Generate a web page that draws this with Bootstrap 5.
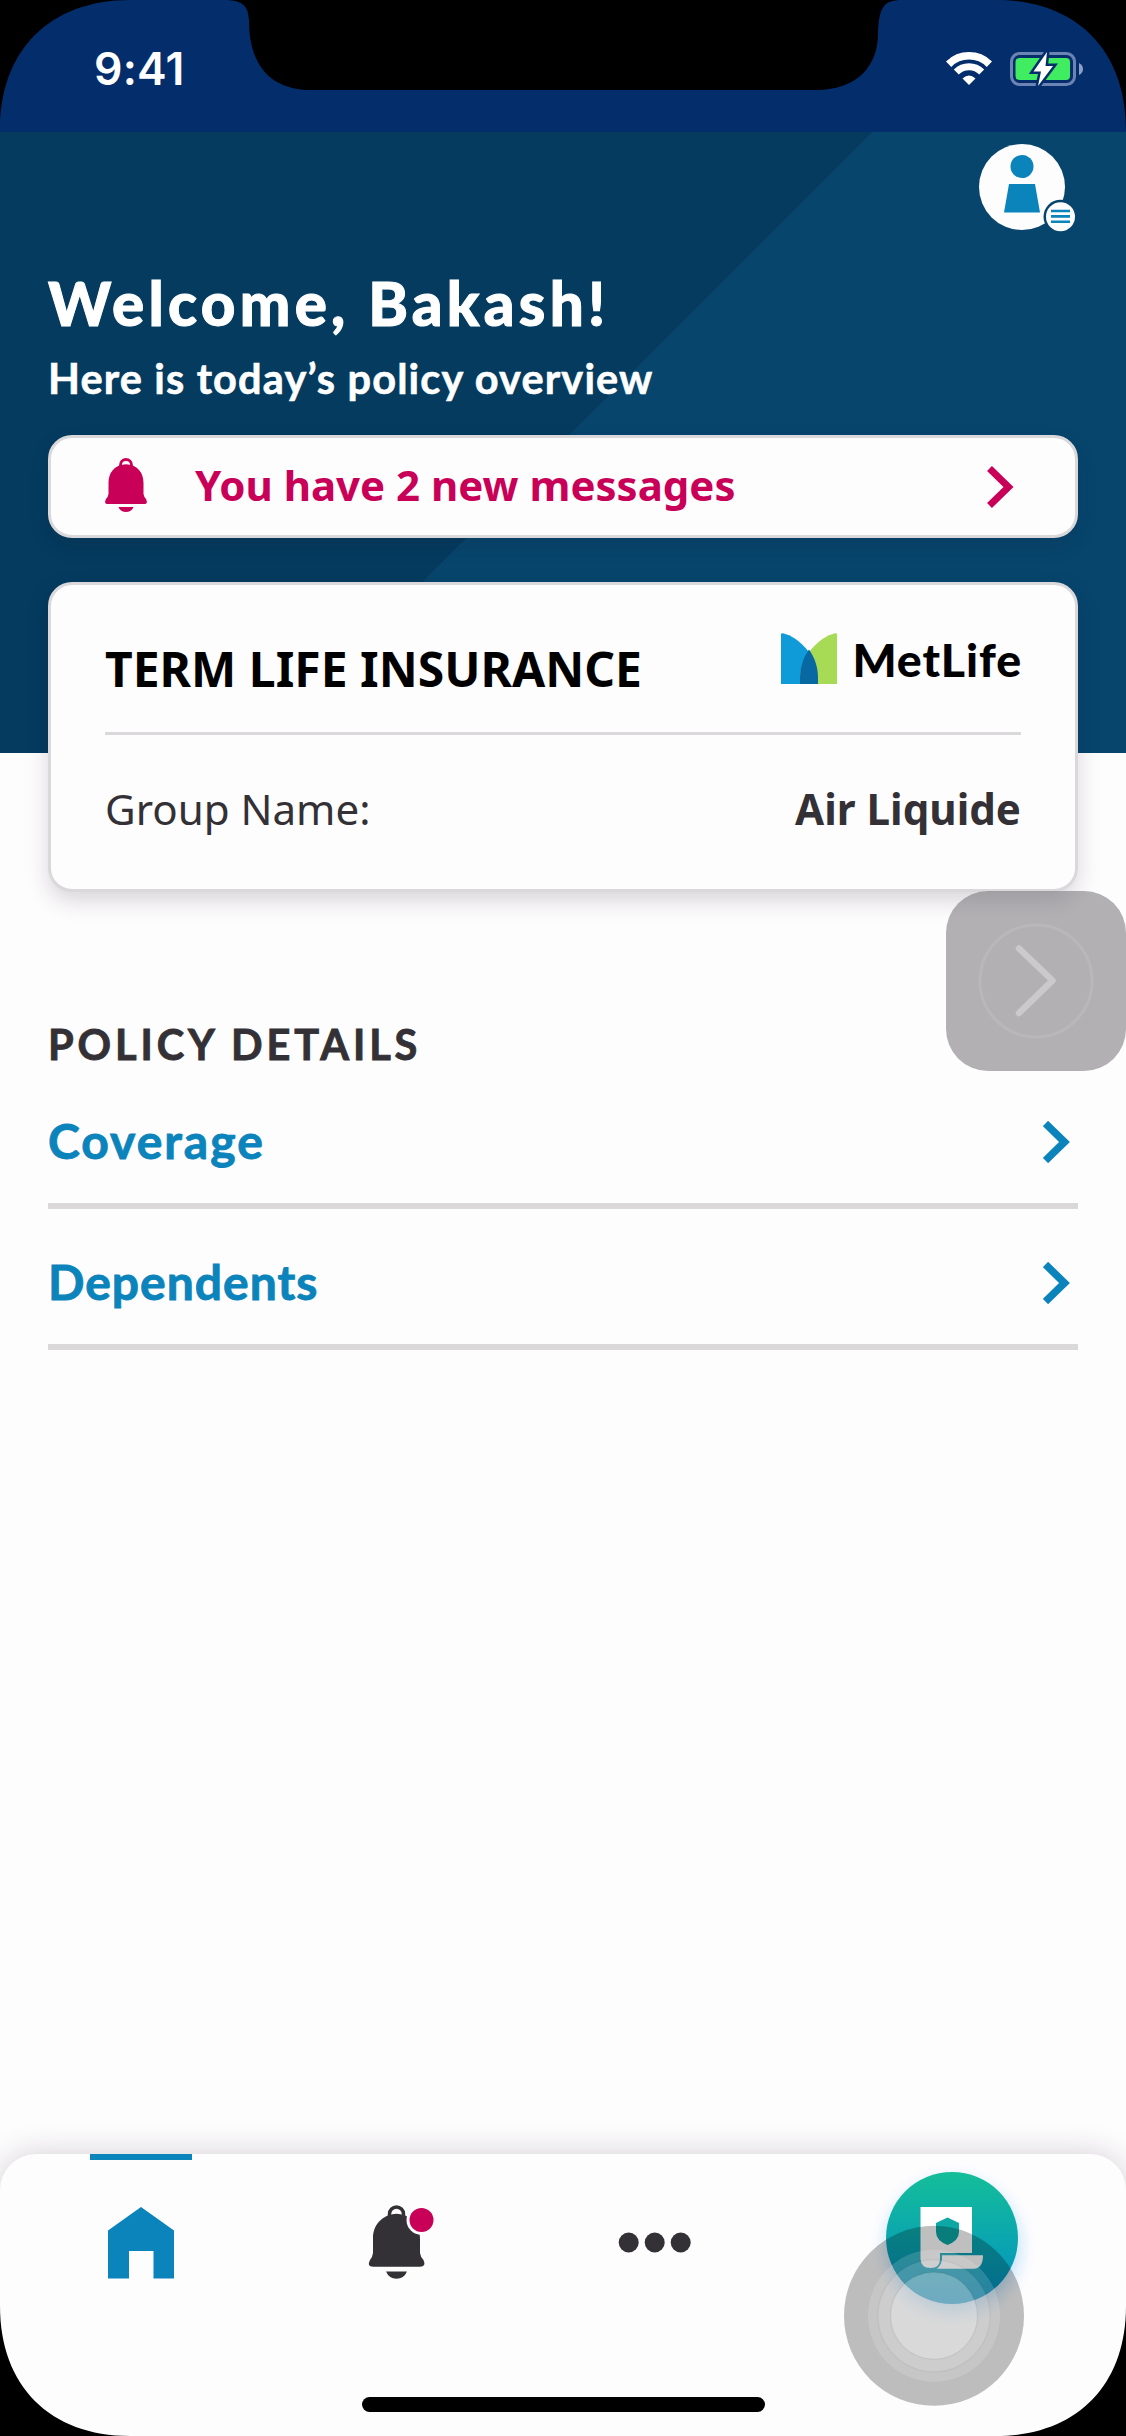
<!DOCTYPE html>
<html lang="en">
<head>
<meta charset="utf-8">
<meta name="viewport" content="width=device-width, initial-scale=1">
<title>Policy overview</title>
<link href="https://cdn.jsdelivr.net/npm/bootstrap@5.3.0/dist/css/bootstrap.min.css" rel="stylesheet">
<style>
  body { margin: 0; background: #fefdfe; overflow-x: hidden; }
  svg { display: block; }
  .phone { width: 1126px; height: 2436px; background: #fefdfe; font-family: Lato, "Liberation Sans", sans-serif; }
  .noto { font-family: "Noto Sans", "Open Sans", sans-serif; }
  .statusbar { height: 132px; background: #042d6b; color: #fff; padding: 6px 42px 0 94px; flex: none; }
  .clock { font: 600 44.5px/1 Inter, "Liberation Sans", sans-serif; letter-spacing: .2px; }
  .battery { margin-left: 18px; }
  .hero { height: 621px; flex: none; padding: 10px 48px 0; color: #fff;
    background: #07456d linear-gradient(135deg, #043b5f 50%, #07456d 50%) 0 0 / 873px 873px no-repeat; }
  .profile { margin-right: 2px; }
  .hello { font-weight: 900; font-size: 60px; line-height: 72px; letter-spacing: 4.3px; margin: 33px 0 0; -webkit-text-stroke: 1px; }
  .subhello { font-weight: 700; font-size: 41.5px; line-height: 50px; letter-spacing: 1.15px; margin: 14px 0 0; -webkit-text-stroke: .6px; }
  .panel { border: 3px solid #dad8da; border-radius: 24px; background: #fefdfe; box-shadow: 0 9px 22px rgba(30, 20, 35, .17); }
  .alertbox { height: 103px; margin-top: 32px; padding: 0 61px 0 54px; color: #c90058; font-weight: 700; font-size: 42px; line-height: 50px; text-decoration: none; box-shadow: 0 8px 20px rgba(30, 20, 35, .12); }
  .alertbox span { margin: -3px 0 0 48px; }
  .bell { margin-top: -4px; }
  .policy { height: 310px; margin: -171px 48px 0; padding: 0 54px; flex: none; }
  .policy-head { height: 150px; border-bottom: 3px solid #dad8da; }
  .policy-title { font-size: 48px; line-height: 60px; font-weight: 700; color: #000; margin: 20px 0 0; }
  .brandname { font-family: Lato, sans-serif; font-size: 46.5px; font-weight: 900; letter-spacing: .9px; color: #000; line-height: 52px; margin: 1px -1px 0 15px; }
  .policy-row { height: 147px; font-size: 42.1px; color: #333135; }
  .details { padding: 0 48px; margin-top: 127px; flex: none; }
  .details-title { font-size: 41.5px; line-height: 50px; font-weight: 700; letter-spacing: 3.9px; color: #333135; margin: 0; -webkit-text-stroke: .9px; }
  .details-link { height: 141px; border-bottom: 6px solid #dad8d9; font-size: 48px; font-weight: 700; letter-spacing: 1px; color: #0b83bb; padding: 12px 8px 0 0; text-decoration: none; }
  .details-link span { -webkit-text-stroke: .9px; margin-top: -2px; }
  .details-title + .details-link { height: 140px; letter-spacing: 2px; }
  .assist { left: 946px; top: 891px; width: 180px; height: 180px; border-radius: 42px; background: rgba(103, 99, 105, .5); }
  .tabs { height: 282px; flex: none; border-radius: 36px 36px 0 0; background: #fefdfe; box-shadow: 0 0 32px rgba(30, 20, 35, .2); }
  .overlay { left: 0; top: 0; pointer-events: none; }
</style>
</head>
<body>
<div class="phone position-relative d-flex flex-column overflow-hidden">
  <header class="statusbar d-flex align-items-center justify-content-between">
    <div class="clock">9:41</div>
    <div class="d-flex align-items-center">
      <svg width="46" height="34" viewBox="0 0 46 34" fill="none" stroke="#fff">
        <path d="M2.6 12.2A29 29 0 0 1 43.4 12.2" stroke-width="7.6"/>
        <path d="M10.3 20A18 18 0 0 1 35.7 20" stroke-width="7"/>
        <path d="M16.5 26.5Q23 20.5 29.5 26.5L23 33Z" fill="#fff" stroke="none"/>
      </svg>
      <svg class="battery" width="74" height="34" viewBox="0 0 74 34">
        <rect x="1.5" y="1.5" width="63" height="31" rx="8" fill="none" stroke="#6b84b3" stroke-width="3"/>
        <path d="M69 11Q73 13 73 17T69 23Z" fill="#8c9fc5"/>
        <rect x="5.5" y="6" width="54.5" height="22" rx="4" fill="#40ed61"/>
        <path d="M37 0L23.5 19.5H31L28 34L43 14H35.5Z" fill="#fff" stroke="#042d6b" stroke-width="5" paint-order="stroke"/>
      </svg>
    </div>
  </header>

  <section class="hero">
    <div class="d-flex justify-content-end">
      <svg class="profile" width="98" height="92" viewBox="978 142 98 92">
        <circle cx="1022" cy="187" r="43" fill="#fefdfe"/>
        <circle cx="1022" cy="166.5" r="11.5" fill="#0b83bb"/>
        <path d="M1009 184H1035L1040 212.5H1004Z" fill="#0b83bb"/>
        <circle cx="1060.5" cy="216.7" r="17" fill="#07456d"/>
        <circle cx="1060.5" cy="216.7" r="14.5" fill="#fefdfe"/>
        <path d="M1051 211H1070M1051 216.4H1070M1051 221.8H1070" stroke="#0b83bb" stroke-width="2.6"/>
      </svg>
    </div>
    <h1 class="hello">Welcome, Bakash!</h1>
    <p class="subhello">Here is today’s policy overview</p>
    <a class="panel alertbox noto d-flex align-items-center" href="#">
      <svg class="bell" width="42" height="54" viewBox="0 0 42 54">
        <path d="M21 6C9 7 3.500 15 3.500 25V36Q3 39 1 41Q-1.500 46 3 46H39Q43.500 46 41 41Q39 39 38.500 36V25C38.500 15 33 7 21 6Z" fill="#c90058"/>
        <path d="M15.500 9V7A5.500 5.500 0 0 1 26.500 7V9" fill="#fefdfe" stroke="#c90058" stroke-width="2.800"/>
        <path d="M14 7.800Q21 4.500 28 7.800V12H14Z" fill="#c90058"/>
        <path d="M13.500 49H28.500Q26.500 54 21 54T13.500 49Z" fill="#c90058"/>
      </svg>
      <span class="flex-grow-1">You have 2 new messages</span>
      <svg width="27" height="42" viewBox="0 0 27 42"><path d="M2.500 2.500L21.500 21L2.500 39.500" fill="none" stroke="#c90058" stroke-width="7"/></svg>
    </a>
  </section>

  <section class="panel policy noto position-relative">
    <div class="policy-head d-flex align-items-center justify-content-between">
      <h2 class="policy-title">TERM LIFE INSURANCE</h2>
      <div class="d-flex align-items-center">
        <svg width="56" height="51" viewBox="0 0 56 51">
          <path d="M0 51V1.500Q0 0 2 .3C18 4 37 24 37 45V51Z" fill="#0f9ad8"/>
          <path d="M56 51V1.500Q56 0 54 .3C38 4 19 24 19 45V51Z" fill="#a7db55"/>
          <path d="M28 16.500C22 25 19 35 19 45V51H37V45C37 35 34 25 28 16.500Z" fill="#0868a2"/>
        </svg>
        <span class="brandname">MetLife</span>
      </div>
    </div>
    <div class="policy-row d-flex align-items-center justify-content-between">
      <span>Group Name:</span><strong>Air Liquide</strong>
    </div>
  </section>

  <section class="details">
    <h3 class="details-title">POLICY DETAILS</h3>
    <a class="details-link d-flex align-items-center justify-content-between" href="#"><span>Coverage</span>
      <svg width="27" height="42" viewBox="0 0 27 42"><path d="M2.500 2.500L21.500 21L2.500 39.500" fill="none" stroke="#0b83bb" stroke-width="7.500"/></svg></a>
    <a class="details-link d-flex align-items-center justify-content-between" href="#"><span>Dependents</span>
      <svg width="27" height="42" viewBox="0 0 27 42"><path d="M2.500 2.500L21.500 21L2.500 39.500" fill="none" stroke="#0b83bb" stroke-width="7.500"/></svg></a>
  </section>

  <nav class="tabs mt-auto">
    <svg width="1126" height="282" viewBox="0 2154 1126 282">
      <defs>
        <linearGradient id="teal" x1="0" y1="0" x2="0" y2="1"><stop offset="0" stop-color="#14be99"/><stop offset="1" stop-color="#028fc4"/></linearGradient>
        <filter id="glow" x="-50%" y="-50%" width="200%" height="200%"><feGaussianBlur stdDeviation="9"/></filter>
      </defs>
      <!-- active tab and home -->
      <rect x="90" y="2154" width="102" height="6" fill="#0b83bb"/>
      <path d="M108 2230.500L141 2207L174 2230.500V2278.500H153.500V2251H129V2278.500H108Z" fill="#0b83bb"/>
      <!-- alerts -->
      <g fill="#333135">
        <path d="M396.500 2213.500C381 2215 373 2226 373 2238V2253Q372.500 2257 370 2260Q366.500 2266.700 373 2266.700H420Q426.500 2266.700 423.500 2260Q420.500 2257 420 2253V2238C420 2226 412 2215 396.500 2213.500Z"/>
        <path d="M389.500 2216V2214A7 7 0 0 1 403.500 2214V2216" fill="#fefdfe" stroke="#333135" stroke-width="3.500"/>
        <path d="M388 2216Q396.500 2211.500 405 2216V2221H388Z"/>
        <path d="M386 2271.500H407Q404 2278.700 396.500 2278.700T386 2271.500Z"/>
      </g>
      <circle cx="421.500" cy="2220" r="15" fill="#fefdfe"/>
      <circle cx="421.500" cy="2220" r="12" fill="#c90058"/>
      <!-- more -->
      <g fill="#333135"><circle cx="628.700" cy="2242.500" r="10"/><circle cx="654.700" cy="2242.500" r="10"/><circle cx="680.700" cy="2242.500" r="10"/></g>
      <!-- policy document -->
      <circle cx="953" cy="2246" r="66" fill="#1592e8" opacity=".3" filter="url(#glow)"/>
      <circle cx="952" cy="2238" r="66" fill="url(#teal)"/>
      <path d="M920.500 2207H972V2253H940V2259Q940 2268 930.500 2268T920.500 2259Z" fill="#fff"/>
      <path d="M947.500 2217.500L959 2223V2232Q959 2240.500 947.500 2245Q936 2240.500 936 2232V2223Z" fill="#0da7a6"/>
      <path d="M942 2255.300H983Q983 2268.700 973.500 2268.700H937Q942.500 2265 942 2255.300Z" fill="#fff"/>
      <!-- touch indicator -->
      <g>
        <circle cx="934" cy="2315.800" r="90" fill="#000" opacity=".25"/>
        <circle cx="934" cy="2315.800" r="66" fill="#fff" opacity=".15"/>
        <circle cx="934" cy="2315.800" r="56" fill="#fff" fill-opacity=".13" stroke="#000" stroke-opacity=".04" stroke-width="1.500"/>
        <circle cx="934" cy="2315.800" r="43.500" fill="#fff" fill-opacity=".24" stroke="#000" stroke-opacity=".05" stroke-width="1.500"/>
      </g>
      <rect x="362" y="2397" width="403" height="15" rx="7.500" fill="#000"/>
    </svg>
  </nav>

  <!-- floating assist button -->
  <div class="assist position-absolute">
    <svg width="180" height="180" fill="none">
      <circle cx="90" cy="90" r="56" stroke="#b9b7ba" stroke-width="3"/>
      <path d="M73 57.500L106.500 89.500L73 122" stroke="#cbc9cc" stroke-width="6.500" stroke-linecap="round" stroke-linejoin="round"/>
    </svg>
  </div>

  <!-- display bezel: corners and notch -->
  <svg class="overlay position-absolute" width="1126" height="2436" viewBox="0 0 1126 2436">
    <path d="M0 0H130C50 0 0 50 0 130Z"/>
    <path d="M1126 0H996C1076 0 1126 50 1126 130Z"/>
    <path d="M0 2436H130C50 2436 0 2386 0 2306Z"/>
    <path d="M1126 2436H996C1076 2436 1126 2386 1126 2306Z"/>
    <path d="M227 0C243 1 248 6 249 20C249 65 270 90 312 90H816C858 90 878 65 878 34C879 8 883 1 900 0Z"/>
  </svg>
</div>
<script src="https://cdn.jsdelivr.net/npm/bootstrap@5.3.0/dist/js/bootstrap.bundle.min.js"></script>
</body>
</html>
